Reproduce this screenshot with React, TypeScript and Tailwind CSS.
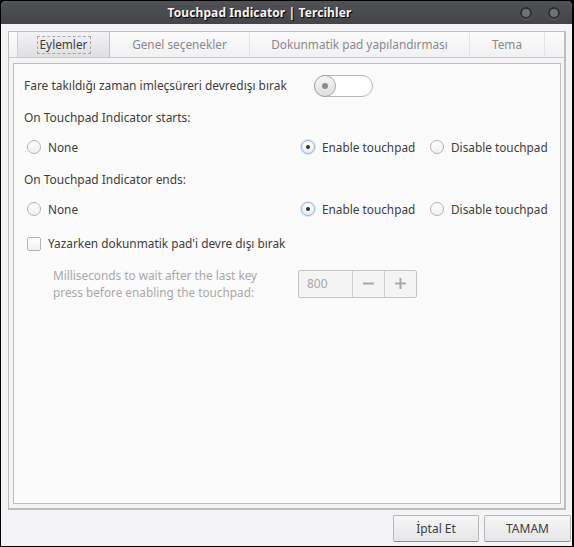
const font = { fontFamily: '"Noto Sans", sans-serif' }

const Radio = ({ checked, label }: { checked?: boolean; label: string }) => (
  <div className="flex items-center gap-[7px]">
    <span
      className={
        checked
          ? "flex h-[14px] w-[14px] items-center justify-center rounded-full border border-[#8fb4ee] bg-gradient-to-b from-[#ffffff] to-[#ececee] shadow-[0_0_0_1px_#d5e3fa]"
          : "flex h-[14px] w-[14px] items-center justify-center rounded-full border border-[#b4b4b4] bg-gradient-to-b from-[#ffffff] to-[#f0f0f0]"
      }
    >
      {checked && <span className="h-[4px] w-[4px] rounded-full bg-[#333]" />}
    </span>
    <span className="text-[11.8px] leading-[16px] text-[#3d3d3d]">{label}</span>
  </div>
)

const RadioRow = () => (
  <div className="ml-[3px] grid h-[18px] grid-cols-[274px_129px_1fr] items-center">
    <Radio label="None" />
    <Radio checked label="Enable touchpad" />
    <Radio label="Disable touchpad" />
  </div>
)

const Tab = ({ label, width, active }: { label: string; width: string; active?: boolean }) => (
  <div
    className={`flex items-center justify-center border-r ${width} ${
      active
        ? "border-[#c4c4c6] bg-gradient-to-b from-[#f3f3f5] to-[#dfdfe1] text-[#3d3d3d]"
        : "border-[#e4e4e6] text-[#8a8a8a]"
    }`}
  >
    {active ? (
      <span className="flex h-[18px] w-[54px] items-center justify-center border border-dashed border-[#a8a8a8]">
        {label}
      </span>
    ) : (
      label
    )}
  </div>
)

export default function App() {
  return (
    <div style={font} className="h-[547px] w-[574px] overflow-hidden bg-black pb-px pl-px pr-[2px] pt-px">
      <div className="flex h-full flex-col overflow-hidden rounded-t-[5px] bg-[#f4f4f6]">
        {/* titlebar */}
        <div className="relative flex h-[23px] shrink-0 items-center justify-center bg-gradient-to-b from-[#505255] to-[#434548] pr-[54px]">
          <span className="text-[12px] font-bold tracking-[0.1px] text-[#f4f4f4] [text-shadow:1px_1px_1px_#000]">
            Touchpad Indicator | Tercihler
          </span>
          <div className="absolute right-[12px] top-[6px] flex gap-[16px]">
            <span className="h-[12px] w-[12px] rounded-full border-2 border-[#2f3032] bg-[#6f7174] shadow-[0_1px_0_#5f6164]" />
            <span className="h-[12px] w-[12px] rounded-full border-2 border-[#2f3032] bg-[#6f7174] shadow-[0_1px_0_#5f6164]" />
          </div>
        </div>

        {/* notebook */}
        <div className="ml-[7px] mt-[7px] flex h-[479px] w-[558px] shrink-0 flex-col border border-[#bdbdbd] border-b-2 border-r-2 bg-[#f4f4f6] pb-[4px]">
          <div className="flex h-[25px] shrink-0 bg-gradient-to-b from-[#fbfbfc] to-[#f1f1f3] text-[11.8px]">
            <div className="w-[9px] border-r border-[#d0d0d2]" />
            <Tab active label="Eylemler" width="w-[92px]" />
            <Tab label="Genel seçenekler" width="w-[140px]" />
            <Tab label="Dokunmatik pad yapılandırması" width="w-[220px]" />
            <Tab label="Tema" width="w-[75px]" />
          </div>
          <div className="h-px shrink-0 bg-[#c8c8ca]" />
          <div className="ml-[4px] mt-[5px] flex min-h-0 w-[548px] flex-1 flex-col border border-[#bdbdbd] bg-[#fbfbfb] pl-[10px]">
            <div className="mt-[11px] flex h-[22px] items-center">
              <span className="w-[290px] text-[11.95px] leading-[16px] text-[#3d3d3d]">
                Fare takıldığı zaman imleçsüreri devredışı bırak
              </span>
              <div className="flex h-[22px] w-[59px] items-center rounded-full border border-[#b8b8b8] bg-white">
                <span className="flex h-[22px] w-[22px] -translate-x-px items-center justify-center rounded-full border border-[#a8a8a8] bg-gradient-to-b from-[#f6f6f6] to-[#dedee0]">
                  <span className="h-[6px] w-[6px] rounded-full bg-[#8c8c8c]" />
                </span>
              </div>
            </div>
            <div className="mt-[13px] text-[11.95px] leading-[16px] text-[#3d3d3d]">On Touchpad Indicator starts:</div>
            <div className="mt-[12px]">
              <RadioRow />
            </div>
            <div className="mt-[16px] text-[11.95px] leading-[16px] text-[#3d3d3d]">On Touchpad Indicator ends:</div>
            <div className="mt-[12px]">
              <RadioRow />
            </div>
            <div className="ml-[3px] mt-[16px] flex h-[18px] items-center gap-[7px]">
              <span className="mt-[2px] h-[14px] w-[14px] rounded-[2px] border border-[#b4b4b4] bg-gradient-to-b from-[#ffffff] to-[#f0f0f0]" />
              <span className="text-[11.85px] leading-[16px] text-[#3d3d3d]">Yazarken dokunmatik pad'i devre dışı bırak</span>
            </div>
            <div className="ml-[29px] mt-[14px] flex items-center">
              <span className="mt-[1px] w-[245px] text-[11.8px] leading-[17px] text-[#a9a9a9]">
                Milliseconds to wait after the last key
                <br />
                press before enabling the touchpad:
              </span>
              <div className="flex h-[28px] w-[119px] rounded-[2px] border border-[#c4c4c4] bg-[#f4f4f4] text-[12px] text-[#a9a9a9]">
                <span className="flex w-[54px] items-center border-r border-[#d0d0d0] pl-[8px]">800</span>
                <span className="flex w-[32px] items-center justify-center border-r border-[#d0d0d0]">
                  <svg width="11" height="11" viewBox="0 0 11 11">
                    <path d="M0 5.5h11" stroke="#a9a9a9" strokeWidth="2" />
                  </svg>
                </span>
                <span className="flex flex-1 items-center justify-center">
                  <svg width="11" height="11" viewBox="0 0 11 11">
                    <path d="M0 5.5h11M5.5 0v11" stroke="#a9a9a9" strokeWidth="2" />
                  </svg>
                </span>
              </div>
            </div>
          </div>
        </div>

        {/* buttons */}
        <div className="mr-[1px] mt-[5px] flex justify-end gap-[5px]">
          <button className="h-[27px] w-[86px] rounded-[2px] border border-[#b8b8b8] border-b-[#8e8e8e] bg-gradient-to-b from-[#f6f6f7] to-[#e6e6e8] text-[12px] text-[#3d3d3d]">
            İptal Et
          </button>
          <button className="h-[27px] w-[87px] rounded-[2px] border border-[#b8b8b8] border-b-[#8e8e8e] bg-gradient-to-b from-[#f6f6f7] to-[#e6e6e8] text-[12px] text-[#3d3d3d]">
            TAMAM
          </button>
        </div>
      </div>
    </div>
  )
}
